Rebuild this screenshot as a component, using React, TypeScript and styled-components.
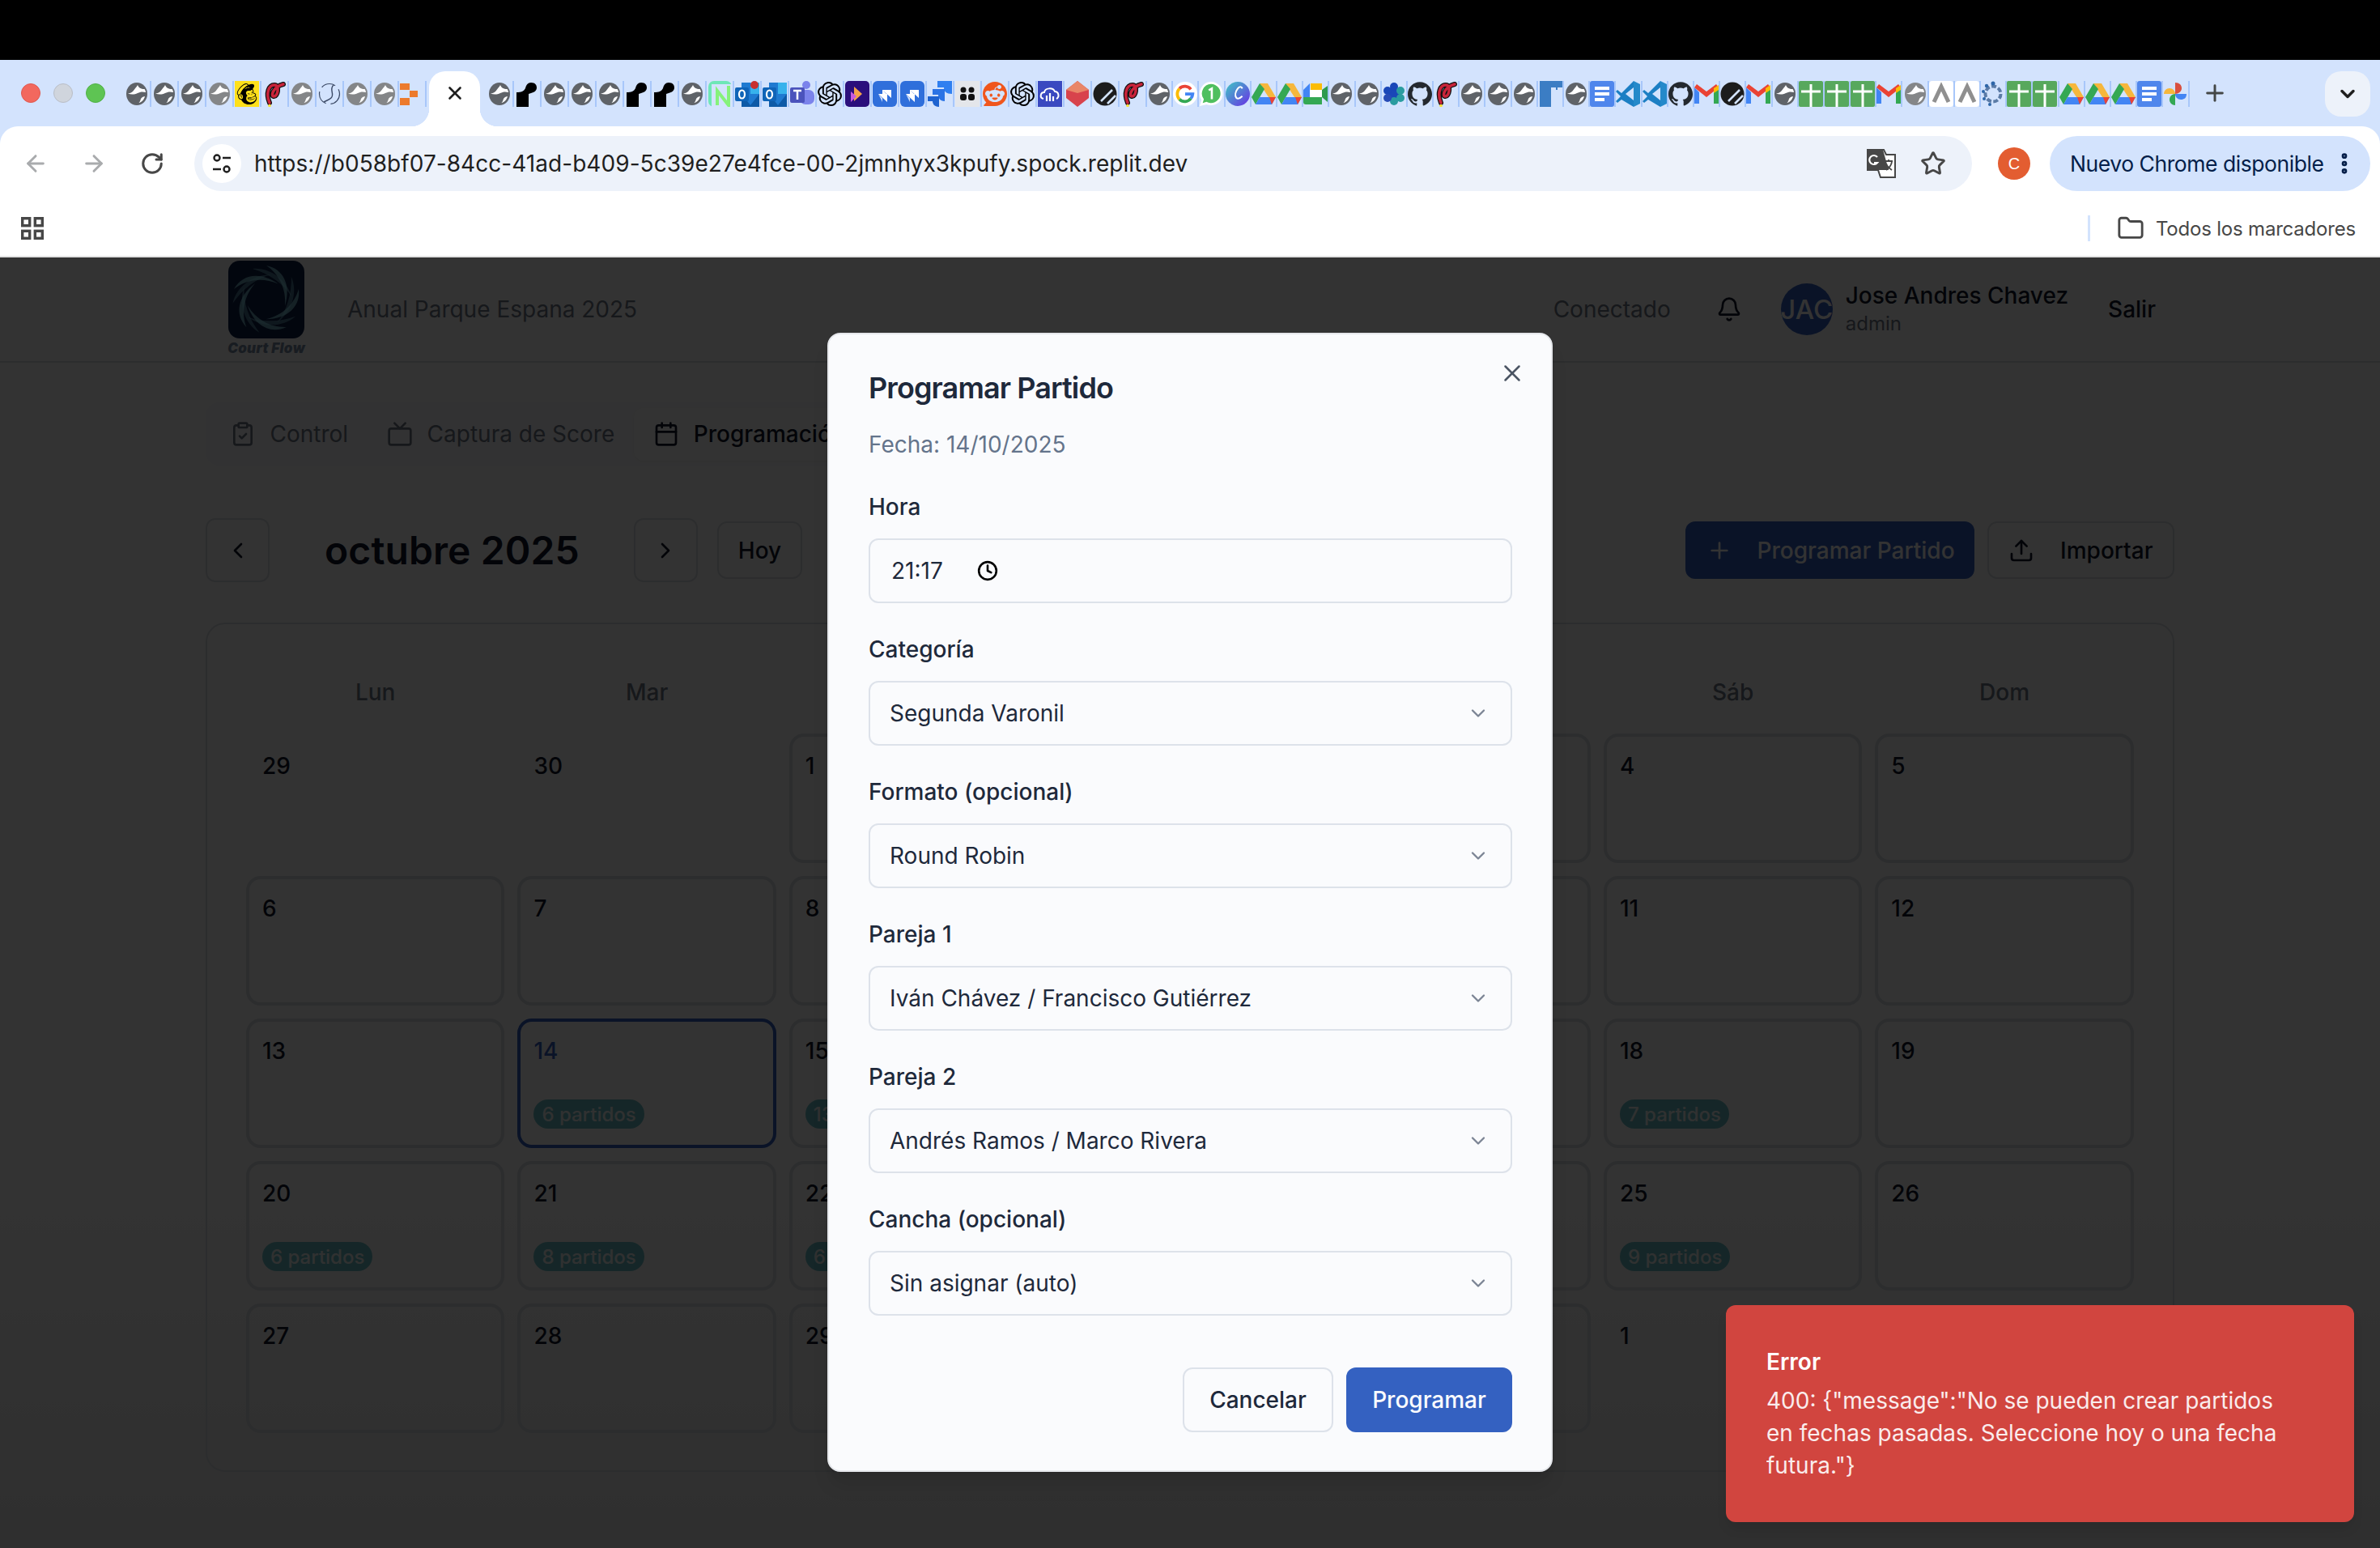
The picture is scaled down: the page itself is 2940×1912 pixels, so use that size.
import React from 'react';
import styled, { createGlobalStyle } from 'styled-components';
import {
  ArrowLeft, ArrowRight, RotateCw, Star, Folder, EllipsisVertical, ChevronDown, ChevronLeft, ChevronRight,
  Plus, Upload, Bell, X, Clock, ClipboardCheck, Tv, Calendar,
} from 'lucide-react';
import { SiGithub, SiOpenai, SiReddit, SiMailchimp } from 'react-icons/si';

const Global = createGlobalStyle`
  html, body { margin: 0; padding: 0; background: #000; }
  * { box-sizing: border-box; }
  body { font-family: "Inter", "Liberation Sans", sans-serif; }
`;

const Screen = styled.div`
  width: 2940px; height: 1912px; display: flex; flex-direction: column; overflow: hidden; background: #000;
`;
const TopBlack = styled.div` height: 74px; background: #000; flex: none; `;
const Chrome = styled.div` background: #d3e3fd; flex: none; `;
const TabStrip = styled.div` height: 82px; display: flex; padding-left: 26px; `;
const Lights = styled.div` display: flex; gap: 16px; padding-top: 29px; width: 126px; flex: none; `;
const Light = styled.span<{ $c: string; $b: string }>`
  width: 24px; height: 24px; border-radius: 50%; background: ${p => p.$c}; border: 1px solid ${p => p.$b};
`;
const FavRow = styled.div<{ $ml?: number }>`
  display: flex; padding-top: 26px; margin-left: ${p => p.$ml ?? 0}px; flex: none;
`;
const Slot = styled.div<{ $w: number }>`
  width: ${p => p.$w}px; height: 32px; display: flex; align-items: center; justify-content: center; position: relative; flex: none;
  &::after { content: ''; position: absolute; right: -1px; top: 0; width: 2px; height: 32px; background: #a8c7fa; }
`;
const FavSvg = styled.svg` width: 30px; height: 32px; display: block; `;
const FavIconWrap = styled.span<{ $c: string; $bg?: string }>`
  width: 30px; height: 32px; display: flex; align-items: center; justify-content: center; color: ${p => p.$c};
  background: ${p => p.$bg ?? 'transparent'};
`;
const ActiveTab = styled.div`
  width: 63px; height: 68px; margin: 14px 0 0 4px; background: #fff; border-radius: 20px 20px 0 0; position: relative; flex: none;
  display: flex; justify-content: center; padding-top: 14px; color: #1f1f1f;
  &::before, &::after { content: ''; position: absolute; bottom: 0; width: 22px; height: 22px; }
  &::before { left: -22px; background: radial-gradient(circle at 0 0, transparent 22px, #fff 22.5px); }
  &::after { right: -22px; background: radial-gradient(circle at 100% 0, transparent 22px, #fff 22.5px); }
`;
const NewTab = styled.div`
  position: relative; width: 32px; height: 32px; margin: 25px 0 0 16px; color: #444746; flex: none;
`;
const TabSearch = styled.div`
  width: 56px; height: 56px; border-radius: 20px; background: #edf2fa; margin: 14px 12px 0 auto; flex: none; display: flex;
  align-items: center; justify-content: center; color: #1f1f1f;
`;
const Toolbar = styled.div`
  height: 100px; background: #fff; border-radius: 22px 22px 0 0; display: flex; align-items: flex-start; padding: 12px 12px 0 0;
`;
const NavBtn = styled.div<{ $dim?: boolean }>`
  width: 72px; height: 68px; display: flex; align-items: center; justify-content: center; flex: none;
  color: ${p => (p.$dim ? '#a9abad' : '#474747')};
`;
const NavGroup = styled.div` display: flex; width: 240px; padding-left: 8px; flex: none; `;
const Omnibox = styled.div`
  width: 2196px; height: 68px; border-radius: 34px; background: #edf2fa; display: flex; align-items: center; padding: 0 16px 0 10px; flex: none;
`;
const SiteBtn = styled.div`
  width: 48px; height: 48px; border-radius: 50%; background: #fff; display: flex; align-items: center; justify-content: center; flex: none;
`;
const Url = styled.div`
  margin-left: 16px; font-size: 28px; letter-spacing: 0.05px; color: #1f1f1f; white-space: nowrap; flex: 1;
`;
const OmniIcon = styled.div`
  width: 64px; display: flex; justify-content: center; color: #474747; flex: none;
`;
const Avatar = styled.div`
  width: 40px; height: 40px; border-radius: 50%; background: #e35d31; color: #fff; font-size: 20px; display: flex;
  align-items: center; justify-content: center; margin: 14px 24px 0 32px; flex: none; font-family: "Liberation Sans", sans-serif;
`;
const UpdatePill = styled.div`
  width: 396px; height: 68px; border-radius: 34px; background: #d3e3fd; color: #041e49; font-size: 26.5px; display: flex;
  align-items: center; justify-content: space-between; padding: 0 16px 0 25px; white-space: nowrap; letter-spacing: -0.45px; flex: none;
`;
const Bookmarks = styled.div`
  height: 60px; background: #fff; display: flex; align-items: center; justify-content: space-between; padding: 0 30px 8px 26px;
`;
const BookmarkRight = styled.div`
  display: flex; align-items: center; color: #474747; font-size: 24px; letter-spacing: -0.2px; white-space: nowrap;
`;
const BookmarkDivider = styled.span` width: 3px; height: 32px; background: #d3e3fd; margin-right: 33px; `;
const FolderLabel = styled.span` margin-left: 14px; `;
const ChromeLine = styled.div` height: 2px; background: #e2e2e2; flex: none; `;

const PageArea = styled.div`
  position: relative; flex: 1; background: linear-gradient(180deg, #fff 70%, #eaeaea 100%); color: #0f172a;
`;
const AppHeader = styled.header`
  height: 130px; border-bottom: 2px solid #dcdfe4; display: flex; align-items: center; padding: 0 277px 0 282px;
`;
const LogoCol = styled.div` width: 94px; display: flex; flex-direction: column; align-items: center; height: 128px; padding-top: 4px; flex: none; `;
const LogoImg = styled.svg` width: 94px; height: 96px; display: block; flex: none; `;
const LogoText = styled.div`
  font-size: 17px; line-height: 24px; font-style: italic; font-weight: 900; color: #7b8ca5; white-space: nowrap; letter-spacing: 0.3px;
`;
const EventName = styled.div` margin-left: 53px; font-size: 28px; color: #6f7787; `;
const HeaderRight = styled.div` margin-left: auto; display: flex; align-items: center; `;
const Connected = styled.div` font-size: 28px; color: #6f7787; `;
const BellWrap = styled.div` margin: 0 48px 0 56px; display: flex; color: #0f172a; `;
const UserAvatar = styled.div`
  width: 64px; height: 64px; border-radius: 50%; background: #3461c1; color: #fff; font-size: 33px; font-weight: 500;
  display: flex; align-items: center; justify-content: center; overflow: hidden; flex: none;
`;
const UserInfo = styled.div` margin-left: 16px; display: flex; flex-direction: column; `;
const UserName = styled.div` font-size: 28px; line-height: 36px; font-weight: 500; `;
const UserRole = styled.div` font-size: 24px; line-height: 34px; color: #6f7787; `;
const Logout = styled.div` margin-left: 49px; font-size: 28px; font-weight: 500; `;

const Main = styled.main` padding: 49px 254px 0 254px; `;
const TabList = styled.div`
  height: 78px; width: 1200px; border-radius: 16px; background: #fbfbfc; display: flex; align-items: center; padding-left: 6px;
`;
const PageTab = styled.div<{ $active?: boolean }>`
  height: 65px; display: flex; align-items: center; gap: 17.5px; padding: 0 24px; font-size: 28px; border-radius: 12px;
  font-weight: ${p => (p.$active ? 500 : 400)};
  color: ${p => (p.$active ? '#0f172a' : '#6f7787')};
  background: ${p => (p.$active ? '#fff' : 'transparent')};
  box-shadow: ${p => (p.$active ? '0 1px 3px rgba(0,0,0,.06)' : 'none')};
  white-space: nowrap;
`;
const CalBar = styled.div` margin-top: 65px; height: 79px; display: flex; align-items: center; justify-content: space-between; `;
const CalLeft = styled.div` display: flex; align-items: center; gap: 26px; `;
const CalRight = styled.div` display: flex; align-items: center; gap: 16px; `;
const Square = styled.div`
  width: 79px; height: 79px; border: 2px solid #dcdfe4; border-radius: 12px; display: flex; align-items: center; justify-content: center;
`;
const MonthTitle = styled.h2` margin: 0 41px 0 42px; font-size: 48px; line-height: 64px; font-weight: 600; letter-spacing: 0.1px; white-space: nowrap; `;
const OutlineBtn = styled.div`
  height: 71px; padding: 0 24.5px; border: 2px solid #dcdfe4; border-radius: 12px; display: flex; align-items: center; font-size: 28px; font-weight: 500; gap: 32px;
`;
const HoyBtn = styled(OutlineBtn)` padding: 0 24px; margin-left: -2px; `;
const PrimaryBtn = styled.div`
  height: 71px; padding: 0 24px 0 26px; background: #3461c1; color: #fff; border-radius: 12px; display: flex; align-items: center; font-size: 28px; font-weight: 500; gap: 31px;
`;
const CalCard = styled.section`
  margin-top: 50px; height: 1049px; border: 2px solid #dcdfe4; border-radius: 24px; padding: 64px 48px 0 48px; 
`;
const Weekdays = styled.div` display: grid; grid-template-columns: repeat(7, 319.4px); column-gap: 16px; `;
const Weekday = styled.div` text-align: center; font-size: 28px; line-height: 40px; font-weight: 500; color: #6f7787; `;
const DayGrid = styled.div`
  margin-top: 31px; display: grid; grid-template-columns: repeat(7, 319.4px); grid-auto-rows: 160px; gap: 16px;
`;
const Day = styled.div<{ $today?: boolean; $other?: boolean }>`
  border: 4px solid ${p => (p.$other ? 'transparent' : p.$today ? '#3461c1' : '#dcdfe4')};
  border-radius: 18px; padding: 16px 16px 20px 16px; display: flex; flex-direction: column; justify-content: space-between; align-items: flex-start;
`;
const DayNum = styled.div<{ $today?: boolean }>`
  font-size: 28px; line-height: 40px; font-weight: 500; color: ${p => (p.$today ? '#3461c1' : '#0f172a')};
`;
const Badge = styled.div`
  height: 36px; border-radius: 18px; padding: 0 10px; background: #6cbfc5; color: #f0f6f6; font-size: 24px; font-weight: 500; display: flex; align-items: center; white-space: nowrap;
`;

const Overlay = styled.div`
  position: absolute; inset: 0; background: rgba(0,0,0,.8); display: flex; align-items: center; justify-content: center;
`;
const Modal = styled.div`
  width: 896px; height: 1407px; margin-bottom: 1px; background: #fafbfd; border: 2px solid #e5e7eb; border-radius: 16px; padding: 46px 48px 0 49px;
  position: relative; color: #1e293b; box-shadow: 0 20px 25px -5px rgba(0,0,0,.1), 0 8px 10px -6px rgba(0,0,0,.1);
`;
const CloseBtn = styled.div` position: absolute; right: 31px; top: 31px; color: #4b5563; display: flex; `;
const ModalTitle = styled.h3` margin: 0; font-size: 36px; line-height: 40px; font-weight: 600; letter-spacing: -0.9px; `;
const ModalSub = styled.p` margin: 30px 0 0; font-size: 28px; line-height: 40px; color: #64748b; `;
const Form = styled.div` margin-top: 37px; display: grid; gap: 37px; `;
const Field = styled.div` display: grid; gap: 19px; `;
const FieldLabel = styled.label` font-size: 28px; line-height: 40px; font-weight: 500; color: #1e293b; `;
const Control = styled.div`
  height: 80px; border: 2px solid #dde2ea; border-radius: 12px; display: flex; align-items: center; font-size: 28px; padding: 0 26px 0 24px; color: #1e293b;
`;
const TimeValue = styled.span` margin-left: 2px; margin-right: 42px; `;
const SelectChevron = styled.span` margin-left: auto; display: flex; color: #7b8494; `;
const Footer = styled.div` margin-top: 64px; display: flex; justify-content: flex-end; gap: 16px; `;
const CancelBtn = styled.div`
  height: 80px; width: 186px; border: 2px solid #dde2ea; border-radius: 12px; display: flex; align-items: center; justify-content: center; font-size: 28px; font-weight: 500;
`;
const SubmitBtn = styled.div`
  height: 80px; width: 205px; border-radius: 12px; background: #3461c1; color: #fafbfd; display: flex; align-items: center; justify-content: center; font-size: 28px; font-weight: 500;
`;
const Toast = styled.div`
  position: absolute; right: 32px; bottom: 32px; width: 776px; height: 268px; border-radius: 12px; background: #d1453f; color: #fff;
  padding: 50px 76px 50px 50px; box-shadow: 0 10px 15px -3px rgba(0,0,0,.1);
`;
const ToastTitle = styled.div` font-size: 28px; line-height: 40px; font-weight: 600; `;
const ToastBody = styled.div` margin-top: 8px; font-size: 28px; line-height: 40px; opacity: .9; `;

const Globe = ({ c }: { c: string }) => (
  <FavSvg viewBox="0 0 30 32">
    <ellipse cx="15" cy="16" rx="13" ry="14" fill={c} />
    <path d="M16 5c1 3 4 5 8.500 5 1 1.500 1.500 3 1.500 4-4-1-7-.5-10 1-4 2-8 2-12 .5 4-.5 6-2 8-5 1.500-2 3-3.500 4-5.500z" fill="#fff" />
    <path d="M25 19c-3 .5-5 2-5.500 4.500-.3 1.500-1 2.500-2 3.500 3.500-.5 6.500-4 7.500-8z" fill="#fff" />
  </FavSvg>
);

const RedP = () => (
  <FavSvg viewBox="0 0 30 32">
    <path d="M9 27C4 15 8 5 15 5c7 0 4 15-1 14-4-1 0-12 12-15" fill="none" stroke="#111" strokeWidth="6" strokeLinecap="round" />
    <path d="M9 27C4 15 8 5 15 5c7 0 4 15-1 14-4-1 0-12 12-15" fill="none" stroke="#c9243a" strokeWidth="3.500" strokeLinecap="round" />
    <circle cx="9" cy="30.500" r="1.800" fill="#f7e33b" />
  </FavSvg>
);

const Fav: React.FC<{ k: string }> = ({ k }) => {
  switch (k) {
    case 'globe': return <Globe c="#5f6368" />;
    case 'globeL': return <Globe c="#848688" />;
    case 'mailchimp': return <FavIconWrap $c="#000" $bg="#ffe01b"><SiMailchimp size={26} /></FavIconWrap>;
    case 'redp': return <RedP />;
    case 'baseball': return (
      <FavSvg viewBox="0 0 30 32">
        <circle cx="15" cy="16" r="12.500" fill="#d3e3fd" stroke="#3c4a66" strokeWidth="1.200" strokeDasharray="18 6" />
        <path d="M20 5c-6 6 2 11-3 16-3 3-6 3-9 5" fill="none" stroke="#3c4a66" strokeWidth="1.400" />
      </FavSvg>
    );
    case 'orange': return (
      <FavSvg viewBox="0 0 30 32">
        <rect x="0" y="3" width="12" height="8" fill="#ec7a2c" />
        <rect x="12" y="12" width="10" height="8" fill="#ec7a2c" />
        <rect x="0" y="21" width="12" height="9" fill="#ec7a2c" />
      </FavSvg>
    );
    case 'black': return (
      <FavSvg viewBox="0 0 30 32">
        <path d="M2 14c6 0 9-1 11-5 1-4 3-7 7-7 5 0 7 3 7 6 0 4-3 6-7 7l-3 1v16H2z" fill="#000" />
      </FavSvg>
    );
    case 'neon': return (
      <FavSvg viewBox="0 0 30 32">
        <rect x="1" y="0" width="29" height="32" rx="7" fill="#6ee7b7" />
        <rect x="5" y="4" width="25" height="28" fill="#d3e3fd" />
        <path d="M12 30V12l14 18V6" fill="none" stroke="#86f27b" strokeWidth="4" />
      </FavSvg>
    );
    case 'outlook':
    case 'outlookR': return (
      <FavSvg viewBox="0 0 30 32">
        <rect x="8" y="2" width="22" height="28" fill="#1f7ad1" />
        <rect x="19" y="2" width="11" height="14" fill="#37b2ec" />
        <path d="M8 16l11 14 11-14v16H8z" fill="#0d5aa7" />
        <rect x="0" y="8" width="17" height="17" rx="2" fill="#0f64b8" />
        <ellipse cx="8.500" cy="16.500" rx="3.500" ry="5" fill="none" stroke="#fff" strokeWidth="2.200" />
        {k === 'outlookR' && <circle cx="24" cy="5" r="5" fill="#c8302f" />}
      </FavSvg>
    );
    case 'teams': return (
      <FavSvg viewBox="0 0 30 32">
        <circle cx="20" cy="5" r="5" fill="#7b83eb" />
        <rect x="12" y="11" width="18" height="18" rx="7" fill="#7b83eb" />
        <rect x="0" y="8" width="18" height="19" rx="2" fill="#4b53bc" />
        <path d="M4 12h10M9 12v11" stroke="#fff" strokeWidth="2.500" />
      </FavSvg>
    );
    case 'openai': return <FavIconWrap $c="#000"><SiOpenai size={30} /></FavIconWrap>;
    case 'purple': return (
      <FavSvg viewBox="0 0 30 32">
        <rect width="30" height="32" rx="5" fill="#2b0f7c" />
        <path d="M11 7l10 9-10 9z" fill="#f4a24a" />
        <path d="M7 13l7 6-7 7z" fill="#c75ae0" />
      </FavSvg>
    );
    case 'jira': return (
      <FavSvg viewBox="0 0 30 32">
        <rect width="30" height="32" rx="6" fill="#2f6fdb" />
        <path d="M12 11h11v10zM7 16h11v10zM12 11l5 5h-5z" fill="#fff" />
        <path d="M7 16l5 5v5z" fill="#cfe0fb" />
      </FavSvg>
    );
    case 'atlassian': return (
      <FavSvg viewBox="0 0 30 32">
        <path d="M12 0h18v16c-7 0-10-3-10-8h-8z" fill="#2f7ff0" />
        <path d="M6 10h15v15C15 25 13 21 13 17H6z" fill="#2a73e5" />
        <path d="M0 19h14v13c-6 0-8-4-8-7H0z" fill="#1e63d0" />
      </FavSvg>
    );
    case 'dots': return (
      <FavSvg viewBox="0 0 30 32">
        <rect width="30" height="32" fill="#e4e6ea" />
        <circle cx="10" cy="11" r="3.500" fill="#111" /><circle cx="20" cy="11" r="3.500" fill="#111" />
        <rect x="6" y="16" width="8" height="8" rx="3" fill="#111" /><rect x="16" y="16" width="8" height="8" rx="3" fill="#111" />
      </FavSvg>
    );
    case 'reddit': return <FavIconWrap $c="#f0561d"><SiReddit size={30} /></FavIconWrap>;
    case 'cloud': return (
      <FavSvg viewBox="0 0 30 32">
        <rect width="30" height="32" fill="#3a49c0" />
        <path d="M7 22c-5-1-4-8 1-8 1-6 11-6 13-1 5 0 6 7 2 9" fill="none" stroke="#fff" strokeWidth="2" />
        <path d="M11 18v7M15 15v10M19 19v6" stroke="#fff" strokeWidth="2.200" />
      </FavSvg>
    );
    case 'gem': return (
      <FavSvg viewBox="0 0 30 32">
        <path d="M15 0l14 11v10L15 32 1 21V11z" fill="#d8434c" />
        <path d="M15 0l14 11-14 4-14-4z" fill="#e98668" />
      </FavSvg>
    );
    case 'slash': return (
      <FavSvg viewBox="0 0 30 32">
        <circle cx="15" cy="16" r="14.500" fill="#1c1c1c" />
        <path d="M10 25l14-14M18 28l10-10" stroke="#d3e3fd" strokeWidth="2.600" />
      </FavSvg>
    );
    case 'google': return (
      <FavSvg viewBox="0 0 32 32">
        <circle cx="16" cy="16" r="16" fill="#fff" />
        <path d="M23.500 10a10 10 0 0 0-15-1" fill="none" stroke="#ea4335" strokeWidth="4" />
        <path d="M8.500 9a10 10 0 0 0 0 14" fill="none" stroke="#fbbc05" strokeWidth="4" />
        <path d="M8.500 23a10 10 0 0 0 15 -1" fill="none" stroke="#34a853" strokeWidth="4" />
        <path d="M23.500 22a10 10 0 0 0 2.500-6H16" fill="none" stroke="#4285f4" strokeWidth="4" />
      </FavSvg>
    );
    case 'wa': return (
      <FavSvg viewBox="0 0 32 32">
        <path d="M16 0a15.500 15.500 0 1 1-6 29.800L1 32l2.500-8A15.500 15.500 0 0 1 16 0z" fill="#fff" />
        <path d="M16 3a12.500 12.500 0 1 1-6 23.500L5 28l1.500-5A12.500 12.500 0 0 1 16 3z" fill="#4fbf5f" />
        <path d="M13 11l4-2v14" fill="none" stroke="#fff" strokeWidth="2.800" />
      </FavSvg>
    );
    case 'canva': return (
      <FavSvg viewBox="0 0 32 32">
        <defs><linearGradient id="cv" x1="0" y1="0" x2="1" y2="1"><stop offset="0" stopColor="#3fc8c4" /><stop offset="1" stopColor="#6a2ee6" /></linearGradient></defs>
        <circle cx="16" cy="16" r="16" fill="url(#cv)" />
        <path d="M22 9c-1-3-4-3-6 0-3 4-4 9-2 12 2 2 5 1 8-2" fill="none" stroke="#fff" strokeWidth="2.200" />
      </FavSvg>
    );
    case 'drive': return (
      <FavSvg viewBox="0 0 30 30">
        <path d="M10 2h10l10 17h-9z" fill="#f6b73c" />
        <path d="M10 2L0 19l5 9 11-19z" fill="#34a853" />
        <path d="M5 28h20l5-9H10z" fill="#4285f4" />
        <path d="M25 28l5-9h-8z" fill="#ea4335" />
      </FavSvg>
    );
    case 'meet': return (
      <FavSvg viewBox="0 0 30 32">
        <path d="M9 3h14v8H9z" fill="#fbbc05" />
        <path d="M0 20h23v9H3a3 3 0 0 1-3-3z" fill="#34a853" />
        <path d="M23 11v9l7 6V6z" fill="#2e9a4f" />
        <rect x="8" y="11" width="15" height="9" fill="#fff" />
        <path d="M0 11l8-8v17H0z" fill="#4285f4" />
      </FavSvg>
    );
    case 'bluegear': return (
      <FavSvg viewBox="0 0 30 32">
        <circle cx="15" cy="16" r="9" fill="#1a47b8" />
        <circle cx="15" cy="7" r="5" fill="#1a47b8" /><circle cx="15" cy="25" r="5" fill="#2a9ca0" />
        <circle cx="7" cy="12" r="5" fill="#1a47b8" /><circle cx="23" cy="12" r="5" fill="#2a9ca0" />
        <circle cx="7" cy="21" r="5" fill="#274bb5" /><circle cx="23" cy="21" r="5" fill="#2a9ca0" />
      </FavSvg>
    );
    case 'github': return <FavIconWrap $c="#24292f"><SiGithub size={30} /></FavIconWrap>;
    case 'bluef': return (
      <FavSvg viewBox="0 0 30 32">
        <path d="M2 0h28v8h-6v3h-8v21H2z" fill="#3b7dc4" />
        <rect x="16" y="8" width="6" height="4" fill="#d3e3fd" />
      </FavSvg>
    );
    case 'docs': return (
      <FavSvg viewBox="0 0 30 32">
        <rect width="30" height="32" rx="3" fill="#4f86ec" />
        <path d="M6 7h18v4H6zM6 14h18v4H6zM6 21h12v4H6z" fill="#fff" />
      </FavSvg>
    );
    case 'vscode': return (
      <FavSvg viewBox="0 0 30 32">
        <path d="M22 0l8 4v24l-8 4z" fill="#2489ca" />
        <path d="M22 0L7 15l-5-4-2 2 6 6-6 6 2 2 5-4 15 9V24L12 16l10-8z" fill="#1c7fc4" />
      </FavSvg>
    );
    case 'gmail': return (
      <FavSvg viewBox="0 0 30 32">
        <path d="M0 8v20h6V14z" fill="#4285f4" />
        <path d="M24 14v14h6V8z" fill="#34a853" />
        <path d="M0 8l15 12L30 8l-3-4-12 9L3 4z" fill="#ea4335" />
        <path d="M24 9l6-4v6l-6 4z" fill="#fbbc05" />
      </FavSvg>
    );
    case 'sheets': return (
      <FavSvg viewBox="0 0 30 32">
        <rect width="30" height="32" rx="2" fill="#57a85d" />
        <path d="M15 4v28M3 13h24" stroke="#fff" strokeWidth="3" />
      </FavSvg>
    );
    case 'aa': return (
      <FavSvg viewBox="0 0 30 32">
        <rect width="30" height="32" rx="4" fill="#fff" />
        <path d="M6 26L15 7l9 19" fill="none" stroke="#8f8f8f" strokeWidth="5" />
      </FavSvg>
    );
    case 'gear': return (
      <FavSvg viewBox="0 0 30 32">
        <circle cx="15" cy="16" r="9.500" fill="none" stroke="#5b7ba6" strokeWidth="4" strokeDasharray="6 2.500" />
        <circle cx="15" cy="3" r="2.500" fill="#2e66a8" /><circle cx="7" cy="6" r="2.200" fill="#2e66a8" /><circle cx="3" cy="13" r="2" fill="#2e66a8" />
        <circle cx="4" cy="22" r="2" fill="#2e66a8" /><circle cx="11" cy="29" r="2" fill="#2e66a8" />
      </FavSvg>
    );
    case 'pinwheel': return (
      <FavSvg viewBox="0 0 30 32">
        <path d="M15 16V2c5 0 8 3 8 7s-4 7-8 7z" fill="#d9503f" />
        <path d="M15 16h14c0 5-3 7-7 7s-7-3-7-7z" fill="#4285f4" />
        <path d="M15 16v14c-4 0-7-3-7-7s3-7 7-7z" fill="#34a853" />
        <path d="M15 16H1c0-4 3-7 7-7s7 3 7 7z" fill="#f6b73c" />
      </FavSvg>
    );
    default: return null;
  }
};

const groupA = ['globe', 'globe', 'globe', 'globeL', 'mailchimp', 'redp', 'globeL', 'baseball', 'globeL', 'globeL', 'orange'];
const groupB = ['globe', 'black', 'globe', 'globe', 'globe', 'black', 'black', 'globe', 'neon', 'outlookR', 'outlook', 'teams', 'openai', 'purple', 'jira', 'jira', 'atlassian', 'dots', 'reddit', 'openai', 'cloud', 'gem', 'slash', 'redp'];
const groupC = ['globe', 'google', 'wa', 'canva', 'drive', 'drive', 'meet', 'globe', 'globe', 'bluegear', 'github', 'redp', 'globe', 'globe', 'globe', 'bluef', 'globe', 'docs', 'vscode', 'vscode', 'github', 'gmail', 'slash', 'gmail', 'globe', 'sheets', 'sheets', 'sheets', 'gmail', 'globeL', 'aa', 'aa', 'gear', 'sheets', 'sheets', 'drive', 'drive', 'drive', 'docs', 'pinwheel'];

const TuneIcon = () => (
  <svg width="28" height="28" viewBox="0 0 28 28" fill="none" stroke="#1f1f1f" strokeWidth="2.400">
    <circle cx="8" cy="7" r="3.500" /><path d="M15 7h10M3 21h10" /><circle cx="20" cy="21" r="3.500" />
  </svg>
);
const TranslateIcon = () => (
  <svg width="36" height="36" viewBox="0 0 36 36">
    <path d="M1 1h20l3 6h11v28H17l-3-9H1z" fill="#fff" stroke="#474747" strokeWidth="2" />
    <path d="M1 1h19l7 25H1z" fill="#474747" />
    <path d="M16 10a5.500 5.500 0 1 0 0 7h-4" fill="none" stroke="#fff" strokeWidth="2.200" transform="translate(-3,0)" />
    <path d="M23 15h9M27 13v3M31 16c-1 5-4 8-7 10M24 18c1 3 4 6 7 8" fill="none" stroke="#474747" strokeWidth="1.800" />
  </svg>
);
const AppsIcon = () => (
  <svg width="28" height="28" viewBox="0 0 28 28" fill="none" stroke="#474747" strokeWidth="3.400">
    <rect x="1.700" y="1.700" width="9" height="9" /><rect x="17.300" y="1.700" width="9" height="9" />
    <rect x="1.700" y="17.300" width="9" height="9" /><rect x="17.300" y="17.300" width="9" height="9" />
  </svg>
);
const SwirlLogo = () => (
  <LogoImg viewBox="0 0 94 96">
    <rect width="94" height="96" rx="14" fill="#0e2048" />
    {[0, 72, 144, 216, 288].map(a => (
      <g key={a} transform={`rotate(${a} 47 48)`} fill="#8fdcec">
        <path d="M47 6C68 10 78 30 70 56 72 34 62 16 47 6z" opacity=".7" />
        <path d="M30 10C52 8 72 24 78 44 68 28 50 16 30 10z" opacity=".45" />
      </g>
    ))}
  </LogoImg>
);

const rows: { n: number; other?: boolean; today?: boolean; badge?: string }[] = [
  { n: 29, other: true }, { n: 30, other: true }, { n: 1 }, { n: 2 }, { n: 3 }, { n: 4 }, { n: 5 },
  { n: 6 }, { n: 7 }, { n: 8 }, { n: 9 }, { n: 10 }, { n: 11 }, { n: 12 },
  { n: 13 }, { n: 14, today: true, badge: '6 partidos' }, { n: 15, badge: '13 partidos' }, { n: 16 }, { n: 17 }, { n: 18, badge: '7 partidos' }, { n: 19 },
  { n: 20, badge: '6 partidos' }, { n: 21, badge: '8 partidos' }, { n: 22, badge: '6 partidos' }, { n: 23 }, { n: 24 }, { n: 25, badge: '9 partidos' }, { n: 26 },
  { n: 27 }, { n: 28 }, { n: 29 }, { n: 30 }, { n: 31 }, { n: 1, other: true }, { n: 2, other: true },
];

const selects = [
  ['Categoría', 'Segunda Varonil'],
  ['Formato (opcional)', 'Round Robin'],
  ['Pareja 1', 'Iván Chávez / Francisco Gutiérrez'],
  ['Pareja 2', 'Andrés Ramos / Marco Rivera'],
  ['Cancha (opcional)', 'Sin asignar (auto)'],
];

export default function App() {
  return (
    <Screen>
      <Global />
      <TopBlack />
      <Chrome>
        <TabStrip>
          <Lights>
            <Light $c="#f2685e" $b="#e0574e" />
            <Light $c="#d0d5dd" $b="#b9bec7" />
            <Light $c="#5ec453" $b="#4fb146" />
          </Lights>
          <FavRow>{groupA.map((k, i) => <Slot key={i} $w={34}><Fav k={k} /></Slot>)}</FavRow>
          <ActiveTab><X size={26} strokeWidth={2.400} /></ActiveTab>
          <FavRow $ml={7}>{groupB.map((k, i) => <Slot key={i} $w={34}><Fav k={k} /></Slot>)}</FavRow>
          <FavRow>{groupC.map((k, i) => <Slot key={i} $w={32.2}><Fav k={k} /></Slot>)}</FavRow>
          <NewTab><Plus size={32} strokeWidth={2.200} /></NewTab>
          <TabSearch><ChevronDown size={28} strokeWidth={3} /></TabSearch>
        </TabStrip>
        <Toolbar>
          <NavGroup>
            <NavBtn $dim><ArrowLeft size={32} strokeWidth={2.200} /></NavBtn>
            <NavBtn $dim><ArrowRight size={32} strokeWidth={2.200} /></NavBtn>
            <NavBtn><RotateCw size={30} strokeWidth={2.400} /></NavBtn>
          </NavGroup>
          <Omnibox>
            <SiteBtn><TuneIcon /></SiteBtn>
            <Url>https://b058bf07-84cc-41ad-b409-5c39e27e4fce-00-2jmnhyx3kpufy.spock.replit.dev</Url>
            <OmniIcon><TranslateIcon /></OmniIcon>
            <OmniIcon><Star size={32} strokeWidth={2.200} /></OmniIcon>
          </Omnibox>
          <Avatar>C</Avatar>
          <UpdatePill>
            Nuevo Chrome disponible
            <EllipsisVertical size={32} strokeWidth={3} />
          </UpdatePill>
        </Toolbar>
        <Bookmarks>
          <AppsIcon />
          <BookmarkRight>
            <BookmarkDivider />
            <Folder size={34} strokeWidth={2} />
            <FolderLabel>Todos los marcadores</FolderLabel>
          </BookmarkRight>
        </Bookmarks>
      </Chrome>
      <ChromeLine />
      <PageArea>
        <AppHeader>
          <LogoCol>
            <SwirlLogo />
            <LogoText>Court Flow</LogoText>
          </LogoCol>
          <EventName>Anual Parque Espana 2025</EventName>
          <HeaderRight>
            <Connected>Conectado</Connected>
            <BellWrap><Bell size={32} strokeWidth={2} /></BellWrap>
            <UserAvatar>JAC</UserAvatar>
            <UserInfo>
              <UserName>Jose Andres Chavez</UserName>
              <UserRole>admin</UserRole>
            </UserInfo>
            <Logout>Salir</Logout>
          </HeaderRight>
        </AppHeader>
        <Main>
          <TabList>
            <PageTab><ClipboardCheck size={32} strokeWidth={2} />Control</PageTab>
            <PageTab><Tv size={32} strokeWidth={2} />Captura de Score</PageTab>
            <PageTab $active><Calendar size={32} strokeWidth={2} />Programación</PageTab>
          </TabList>
          <CalBar>
            <CalLeft>
              <Square><ChevronLeft size={32} strokeWidth={2} /></Square>
              <MonthTitle>octubre 2025</MonthTitle>
              <Square><ChevronRight size={32} strokeWidth={2} /></Square>
              <HoyBtn>Hoy</HoyBtn>
            </CalLeft>
            <CalRight>
              <PrimaryBtn><Plus size={32} strokeWidth={2} />Programar Partido</PrimaryBtn>
              <OutlineBtn><Upload size={32} strokeWidth={2} />Importar</OutlineBtn>
            </CalRight>
          </CalBar>
          <CalCard>
            <Weekdays>
              {['Lun', 'Mar', 'Mié', 'Jue', 'Vie', 'Sáb', 'Dom'].map(d => <Weekday key={d}>{d}</Weekday>)}
            </Weekdays>
            <DayGrid>
              {rows.map((d, i) => (
                <Day key={i} $today={d.today} $other={d.other}>
                  <DayNum $today={d.today}>{d.n}</DayNum>
                  {d.badge && <Badge>{d.badge}</Badge>}
                </Day>
              ))}
            </DayGrid>
          </CalCard>
        </Main>
        <Overlay>
          <Modal>
            <CloseBtn><X size={34} strokeWidth={1.800} /></CloseBtn>
            <ModalTitle>Programar Partido</ModalTitle>
            <ModalSub>Fecha: 14/10/2025</ModalSub>
            <Form>
              <Field>
                <FieldLabel>Hora</FieldLabel>
                <Control>
                  <TimeValue>21:17</TimeValue>
                  <Clock size={26} strokeWidth={2.400} color="#000" />
                </Control>
              </Field>
              {selects.map(([label, value]) => (
                <Field key={label}>
                  <FieldLabel>{label}</FieldLabel>
                  <Control>
                    {value}
                    <SelectChevron><ChevronDown size={28} strokeWidth={2} /></SelectChevron>
                  </Control>
                </Field>
              ))}
            </Form>
            <Footer>
              <CancelBtn>Cancelar</CancelBtn>
              <SubmitBtn>Programar</SubmitBtn>
            </Footer>
          </Modal>
        </Overlay>
        <Toast>
          <ToastTitle>Error</ToastTitle>
          <ToastBody>400: {'{"message":"No se pueden crear partidos en fechas pasadas. Seleccione hoy o una fecha futura."}'}</ToastBody>
        </Toast>
      </PageArea>
    </Screen>
  );
}
